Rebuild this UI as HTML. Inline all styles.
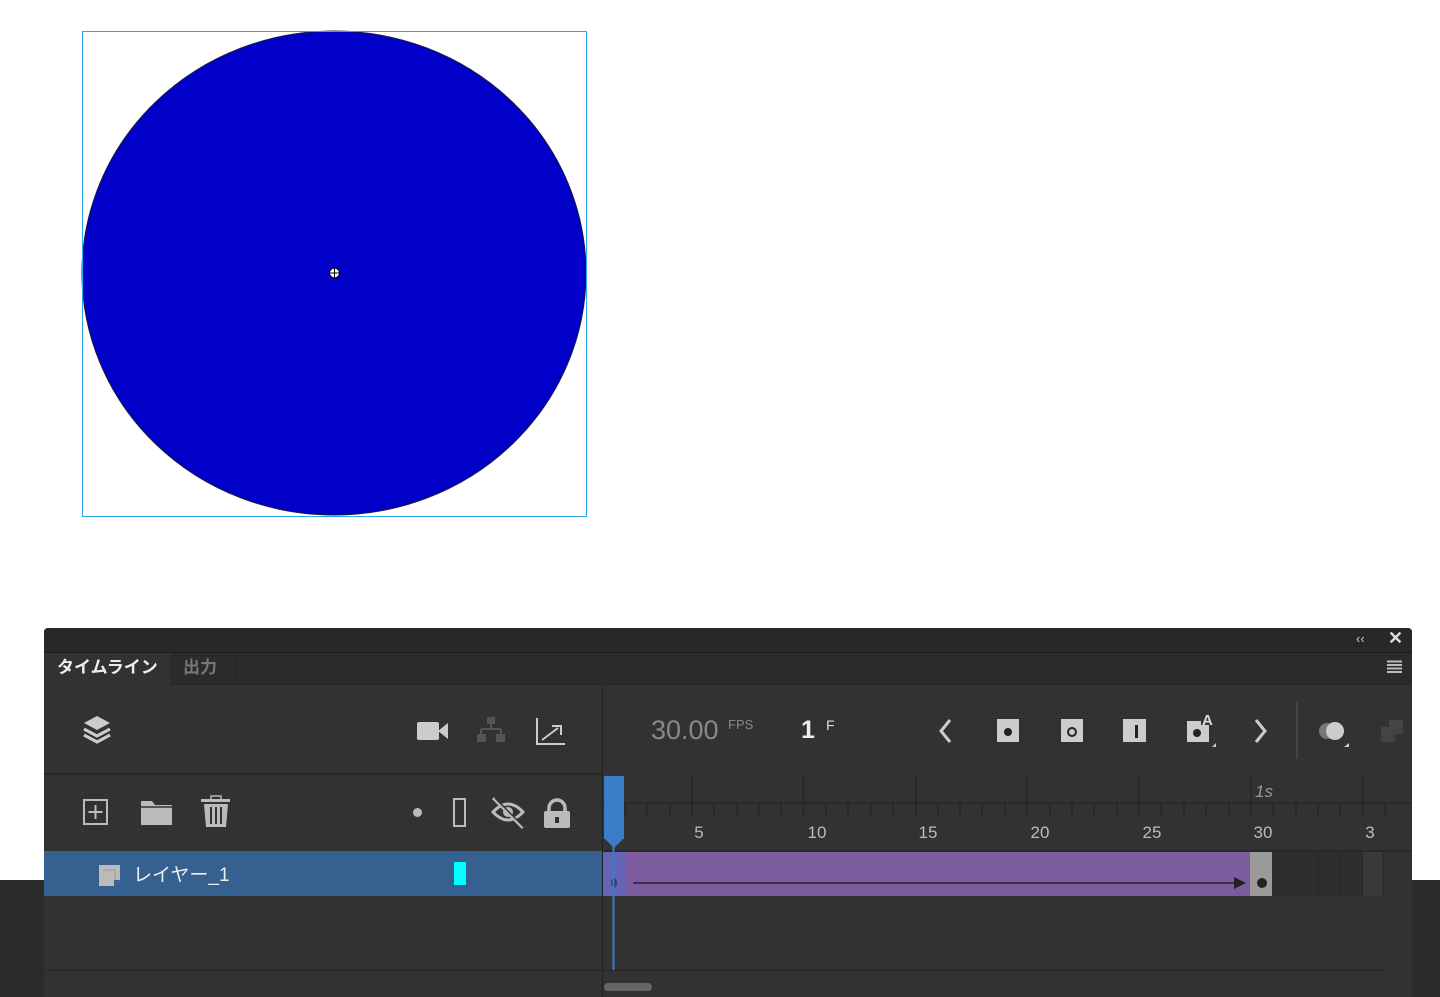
<!DOCTYPE html>
<html><head><meta charset="utf-8"><style>
html,body{margin:0;padding:0}
body{width:1440px;height:997px;position:relative;overflow:hidden;background:#fff;font-family:"Liberation Sans","Noto Sans CJK JP",sans-serif}
.a{position:absolute}
</style></head><body>
<div class="a" style="left:0;top:880px;width:1440px;height:117px;background:#2b2b2b"></div>
<svg class="a" style="left:0;top:0" width="600" height="530">
<ellipse cx="334" cy="273" rx="252" ry="242" fill="#0000c8" stroke="#1a1a40" stroke-width="1"/>
<rect x="82.5" y="31.5" width="504" height="485" fill="none" stroke="#29a9e8" stroke-width="1"/>
<circle cx="334.5" cy="273" r="5" fill="#fff" stroke="#000" stroke-width="1"/>
<path d="M334.5 268v10M329.5 273h10" stroke="#000" stroke-width="1"/>
</svg>
<div class="a" style="left:44px;top:628px;width:1368px;height:369px;background:#323232;border-radius:4px 4px 0 0"></div>
<div class="a" style="left:44px;top:628px;width:1368px;height:24px;background:#282828;border-radius:4px 4px 0 0;border-bottom:1px solid #1c1c1c"></div>
<div class="a" style="left:1356px;top:631px;color:#ccc;font-size:13px">‹‹</div>
<div class="a" style="left:1388px;top:628px;color:#ddd;font-size:18px;font-weight:bold">✕</div>
<div class="a" style="left:44px;top:653px;width:1368px;height:31px;background:#2b2b2b;border-bottom:1px solid #262626"></div>
<div class="a" style="left:44px;top:653px;width:126px;height:32px;background:#323232"></div>
<div class="a" style="left:57px;top:653px;color:#eee;font-size:17px;font-weight:bold">タイムライン</div>
<div class="a" style="left:170px;top:653px;width:65px;height:31px;border-right:1px solid #252525"></div>
<div class="a" style="left:183px;top:653px;color:#777;font-size:17px;font-weight:bold">出力</div>
<svg class="a" style="left:1387px;top:660px" width="16" height="14"><path d="M0 1.5h15M0 5h15M0 8.5h15M0 12h15" stroke="#bbb" stroke-width="2"/></svg>
<!-- left column -->
<div class="a" style="left:602px;top:685px;width:1px;height:312px;background:#222"></div>
<div class="a" style="left:44px;top:773px;width:558px;height:2px;background:#262626"></div>
<svg class="a" style="left:80px;top:713px" width="36" height="36"><path d="M17 3l13 7-13 7-13-7z" fill="#ccc"/><path d="M4 16l13 7 13-7M4 22l13 7 13-7" fill="none" stroke="#ccc" stroke-width="3"/></svg>
<svg class="a" style="left:416px;top:720px" width="34" height="22"><rect x="1" y="2" width="22" height="18" rx="2" fill="#ccc"/><path d="M22 11l10-8v16z" fill="#ccc"/></svg>
<svg class="a" style="left:476px;top:716px" width="30" height="28"><rect x="11" y="1" width="8" height="7" fill="#555"/><path d="M15 8v5M5 13h20M5 13v5M25 13v5" stroke="#555" stroke-width="2"/><rect x="1" y="18" width="9" height="8" fill="#555"/><rect x="20" y="18" width="9" height="8" fill="#555"/></svg>
<svg class="a" style="left:534px;top:716px" width="34" height="30"><path d="M3 2v26h28" stroke="#ccc" stroke-width="2" fill="none"/><path d="M8 24l16-12" stroke="#ccc" stroke-width="2"/><path d="M18 10h9v9" stroke="#ccc" stroke-width="2" fill="none"/></svg>
<svg class="a" style="left:82px;top:798px" width="28" height="28"><rect x="2" y="2" width="23" height="24" fill="none" stroke="#bbb" stroke-width="2"/><path d="M13.5 7v14M6.5 14h14" stroke="#bbb" stroke-width="2"/></svg>
<svg class="a" style="left:139px;top:799px" width="36" height="28"><path d="M2 2h11l3 4h17v20H2z" fill="#bbb"/><path d="M2 8h31" stroke="#323232" stroke-width="1.5"/></svg>
<svg class="a" style="left:199px;top:795px" width="34" height="34"><rect x="2" y="4" width="29" height="3" fill="#bbb"/><rect x="12" y="1" width="10" height="4" fill="none" stroke="#bbb" stroke-width="1.5"/><path d="M5 9h24l-2 23H7z" fill="#bbb"/><path d="M12 12v17M17 12v17M22 12v17" stroke="#323232" stroke-width="2"/></svg>
<div class="a" style="left:413px;top:808px;width:9px;height:9px;border-radius:50%;background:#bbb"></div>
<div class="a" style="left:453px;top:798px;width:13px;height:29px;border:2.5px solid #bbb;box-sizing:border-box"></div>
<svg class="a" style="left:490px;top:796px" width="36" height="34"><path d="M3 16q15-16 30 0q-15 16-30 0z" fill="none" stroke="#bbb" stroke-width="3"/><circle cx="18" cy="16" r="5" fill="#bbb"/><path d="M3 2l30 30" stroke="#bbb" stroke-width="3"/><path d="M5 2l30 30" stroke="#323232" stroke-width="1.5"/></svg>
<svg class="a" style="left:542px;top:798px" width="30" height="32"><path d="M7 14v-4a8 8 0 0 1 16 0v4" fill="none" stroke="#bbb" stroke-width="3.5"/><rect x="2" y="13" width="26" height="17" rx="2" fill="#bbb"/><rect x="13" y="19" width="4" height="6" fill="#323232"/></svg>
<!-- layer row -->
<div class="a" style="left:44px;top:851px;width:558px;height:45px;background:#36608f"></div>
<svg class="a" style="left:97px;top:863px" width="26" height="26"><path d="M2 2h21v15l-6 6H2z" fill="#bbb"/><path d="M17 23v-6h6" fill="#36608f"/><path d="M6 7h12v10" stroke="#9a9a9a" fill="none"/></svg>
<div class="a" style="left:133px;top:860px;color:#eee;font-size:19px">レイヤー_1</div>
<div class="a" style="left:454px;top:862px;width:12px;height:23px;background:#00ffff"></div>
<div class="a" style="left:44px;top:970px;width:1340px;height:1px;background:#262626"></div>
<!-- right top toolbar -->
<div class="a" style="left:651px;top:715px;color:#888;font-size:27px">30.00</div>
<div class="a" style="left:728px;top:717px;color:#888;font-size:13px">FPS</div>
<div class="a" style="left:801px;top:716px;color:#eee;font-size:25px;font-weight:bold">1</div>
<div class="a" style="left:826px;top:717px;color:#ddd;font-size:14px">F</div>
<svg class="a" style="left:930px;top:700px" width="482" height="62">
<path d="M20 20l-9 11 9 11" stroke="#ccc" stroke-width="3" fill="none"/>
<rect x="67" y="19" width="22" height="23" fill="#ccc"/><circle cx="78" cy="32" r="4" fill="#222"/>
<rect x="131" y="19" width="22" height="23" fill="#ccc"/><circle cx="142" cy="32" r="4" fill="none" stroke="#222" stroke-width="2"/>
<rect x="193" y="19" width="23" height="23" fill="#ccc"/><rect x="205" y="25" width="3" height="13" fill="#222"/>
<rect x="257" y="21" width="22" height="21" fill="#ccc"/><circle cx="267" cy="33" r="4" fill="#222"/><rect x="271" y="12" width="12" height="13" fill="#323232"/><text x="272" y="25" fill="#ddd" font-size="15" font-weight="bold" font-family="Liberation Sans">A</text><path d="M282 47l4-4v4z" fill="#ccc"/>
<path d="M326 20l9 11-9 11" stroke="#ccc" stroke-width="3" fill="none"/>
<rect x="366" y="1" width="2" height="58" fill="#444"/>
<circle cx="397" cy="31" r="8" fill="#777"/><circle cx="405" cy="31" r="9" fill="#ccc"/><path d="M414 47l5-4v4z" fill="#ccc"/>
<rect x="451" y="27" width="14" height="15" fill="#444"/><rect x="459" y="20" width="14" height="14" fill="#444"/>
</svg>
<!-- ruler -->
<svg class="a" style="left:603px;top:775px" width="809" height="222">
<rect x="0" y="0" width="809" height="76" fill="#323232"/>
<g stroke="#262626" stroke-width="1.5">
<line x1="89" y1="0" x2="89" y2="42"/><line x1="200.5" y1="0" x2="200.5" y2="42"/><line x1="313" y1="0" x2="313" y2="42"/><line x1="424" y1="0" x2="424" y2="42"/><line x1="536" y1="0" x2="536" y2="42"/><line x1="648" y1="0" x2="648" y2="42"/><line x1="760" y1="0" x2="760" y2="42"/>
<line x1="0" y1="28" x2="809" y2="28"/>
</g>
<g stroke="#262626" stroke-width="1.5">
<line x1="22" y1="28" x2="22" y2="42"/><line x1="44" y1="28" x2="44" y2="42"/><line x1="67" y1="28" x2="67" y2="42"/><line x1="111" y1="28" x2="111" y2="42"/><line x1="134" y1="28" x2="134" y2="42"/><line x1="156" y1="28" x2="156" y2="42"/><line x1="178" y1="28" x2="178" y2="42"/><line x1="223" y1="28" x2="223" y2="42"/><line x1="245" y1="28" x2="245" y2="42"/><line x1="268" y1="28" x2="268" y2="42"/><line x1="290" y1="28" x2="290" y2="42"/><line x1="335" y1="28" x2="335" y2="42"/><line x1="357" y1="28" x2="357" y2="42"/><line x1="379" y1="28" x2="379" y2="42"/><line x1="402" y1="28" x2="402" y2="42"/><line x1="447" y1="28" x2="447" y2="42"/><line x1="469" y1="28" x2="469" y2="42"/><line x1="491" y1="28" x2="491" y2="42"/><line x1="514" y1="28" x2="514" y2="42"/><line x1="558" y1="28" x2="558" y2="42"/><line x1="581" y1="28" x2="581" y2="42"/><line x1="603" y1="28" x2="603" y2="42"/><line x1="626" y1="28" x2="626" y2="42"/><line x1="670" y1="28" x2="670" y2="42"/><line x1="693" y1="28" x2="693" y2="42"/><line x1="715" y1="28" x2="715" y2="42"/><line x1="737" y1="28" x2="737" y2="42"/><line x1="782" y1="28" x2="782" y2="42"/>
</g>
<g fill="#bbb" font-family="Liberation Sans" font-size="17" text-anchor="middle">
<text x="96" y="63">5</text><text x="214" y="63">10</text><text x="325" y="63">15</text><text x="437" y="63">20</text><text x="549" y="63">25</text><text x="660" y="63">30</text><text x="767" y="63">3</text>
<text x="661" y="22" font-style="italic" fill="#999">1s</text>
</g>
<line x1="0" y1="76" x2="809" y2="76" stroke="#262626" stroke-width="1.5"/>
<rect x="0" y="77" width="781" height="44" fill="#2e2e2e"/>
<g stroke="#262626"><line x1="693" y1="77" x2="693" y2="121"/><line x1="715" y1="77" x2="715" y2="121"/><line x1="737" y1="77" x2="737" y2="121"/><line x1="760" y1="77" x2="760" y2="121"/></g>
<rect x="760" y="77" width="19" height="44" fill="#3a3a3a"/>
<rect x="0" y="77" width="647" height="44" fill="#7c5c9e"/>
<rect x="0" y="77" width="22" height="44" fill="#6464b8"/>
<rect x="647" y="77" width="22" height="44" fill="#9a9a9a"/>
<circle cx="659" cy="108" r="5" fill="#222"/>
<line x1="30" y1="108" x2="632" y2="108" stroke="#3a2c4a" stroke-width="2"/>
<path d="M631 102l12 6-12 6z" fill="#222"/>
<ellipse cx="11" cy="108" rx="3" ry="5" fill="#3a3a6a"/>
<rect x="1" y="1" width="20" height="63" fill="#3a7cc6"/>
<path d="M1 63h20l-10 10z" fill="#3a7cc6"/>
<line x1="10.5" y1="70" x2="10.5" y2="195" stroke="#3a7cc6" stroke-width="2"/>
<rect x="1" y="208" width="48" height="8" rx="4" fill="#666"/>
</svg>
</body></html>
